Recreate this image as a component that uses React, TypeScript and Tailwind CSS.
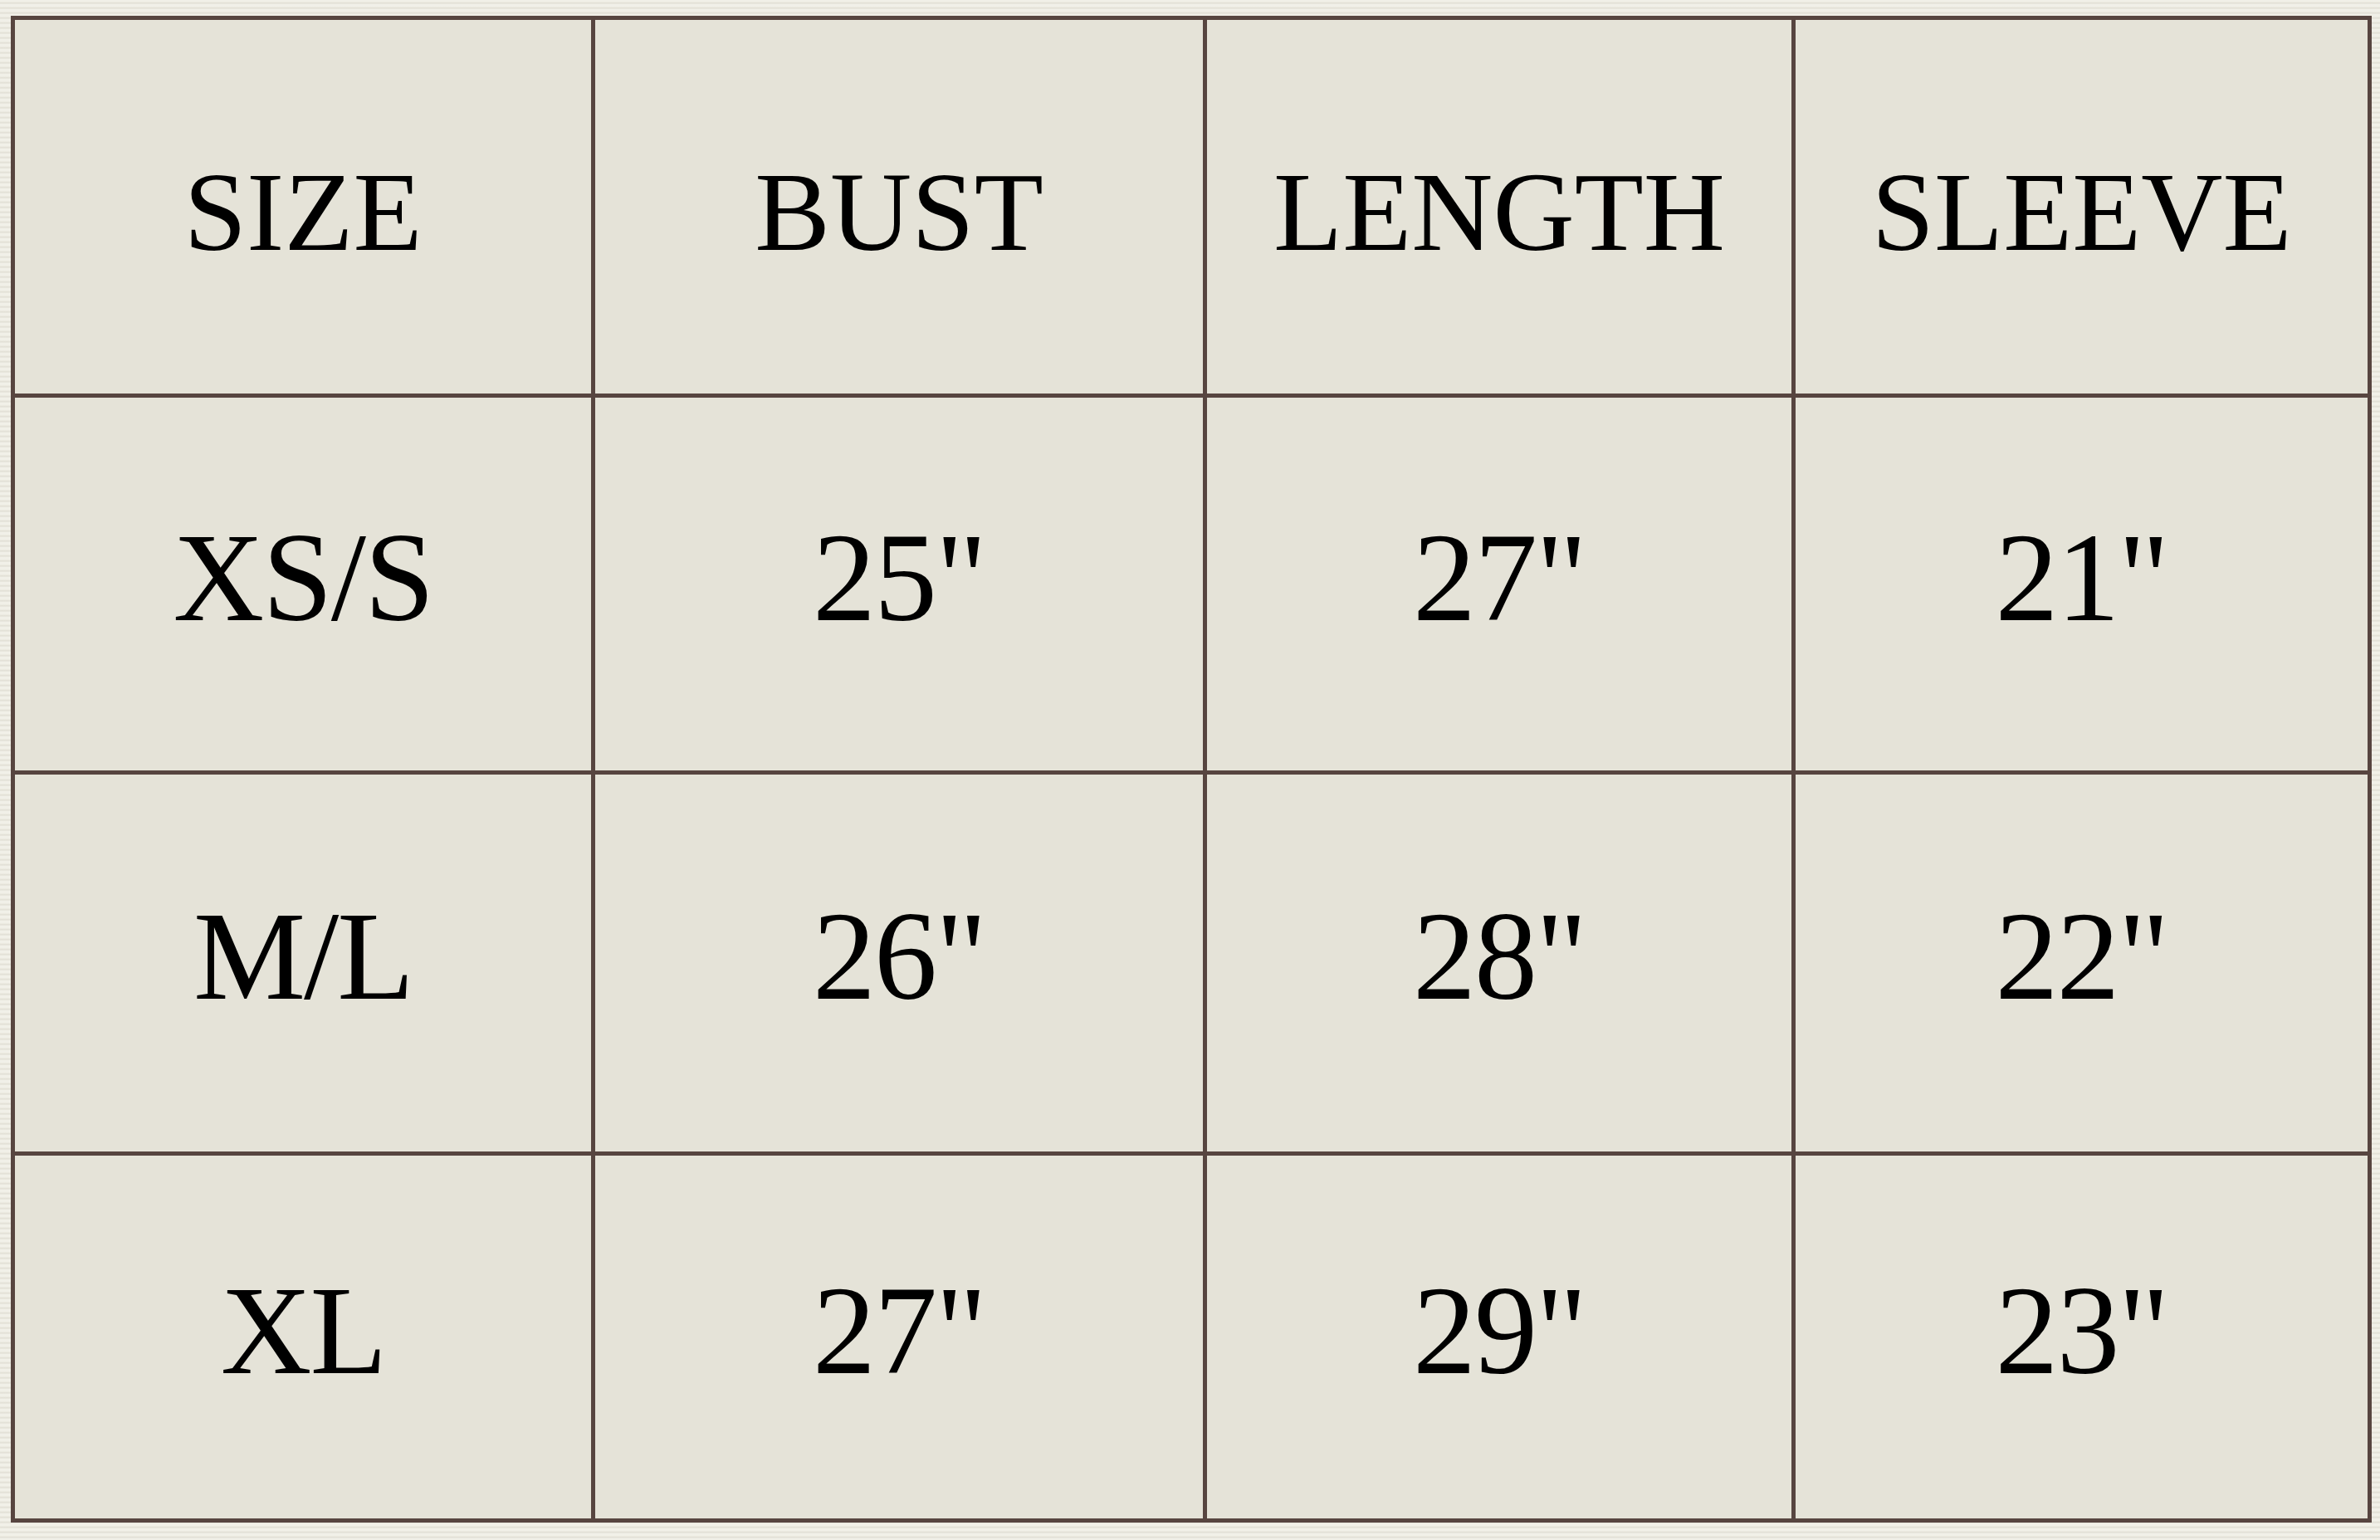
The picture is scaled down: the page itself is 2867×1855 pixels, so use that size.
const headers = ['SIZE', 'BUST', 'LENGTH', 'SLEEVE'];

const rows = [
  ['XS/S', '25"', '27"', '21"'],
  ['M/L', '26"', '28"', '22"'],
  ['XL', '27"', '29"', '23"'],
];

export default function App() {
  return (
    <div className="min-h-screen w-full bg-[#ebe9df] bg-[repeating-linear-gradient(0deg,#f1f0e8_0px,#f1f0e8_2px,#dedcd2_3px,#e9e7dd_4px,#f4f3ec_6px)] pl-[13px] pt-[19px] pb-[21px]">
      <div
        className="grid w-[2844px] grid-cols-[694px_732px_704px_689px] grid-rows-[450px_449px_454px_437px] gap-[5px] bg-[#574540] p-[5px] text-black"
        style={{ fontFamily: '"Liberation Serif", "DejaVu Serif", serif' }}
      >
        {headers.map((h) => (
          <div key={h} className="flex items-center justify-center bg-[#e5e3d8] pt-[12px] text-[136px] leading-none">
            {h}
          </div>
        ))}
        {rows.map((row, r) =>
          row.map((cell, c) => (
            <div key={`${r}-${c}`} className="flex items-center justify-center bg-[#e5e3d8] pb-[16px] text-[152px] leading-none tracking-[-2px]">
              {cell}
            </div>
          ))
        )}
      </div>
    </div>
  );
}
